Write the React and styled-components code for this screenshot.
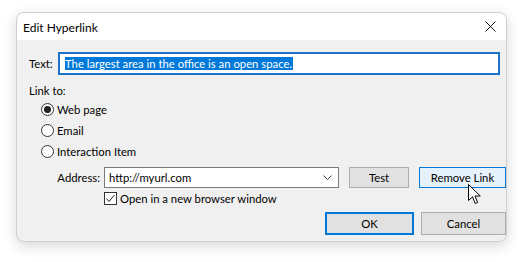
import React from "react";
import styled, { createGlobalStyle } from "styled-components";

const Global = createGlobalStyle`
  html, body {
    margin: 0;
    padding: 0;
    background: #ffffff;
  }
  body {
    font-family: Lato, "Noto Sans", sans-serif;
    font-size: 11.3px;
    line-height: 15px;
    color: #000;
  }
`;

const Page = styled.div`
  width: 531px;
  height: 262px;
  padding: 12px 24px 20px 16px;
  box-sizing: border-box;
`;

const Dialog = styled.div`
  position: relative;
  width: 491px;
  height: 230px;
  border: 1px solid #cfcfcf;
  border-radius: 8px;
  box-sizing: border-box;
  overflow: hidden;
  background: #f0f0f0;
  box-shadow: 0 4px 14px rgba(0, 0, 0, 0.16);
  display: flex;
  flex-direction: column;
`;

const TitleBar = styled.div`
  height: 27px;
  flex-shrink: 0;
  background: #fff;
  display: flex;
  align-items: center;
  justify-content: space-between;
  padding: 0 6px 0 6px;
  font-size: 12px;
`;

const Title = styled.span`
  margin-top: 1px;
`;

const CloseBtn = styled.div`
  width: 20px;
  height: 20px;
  display: flex;
  align-items: center;
  justify-content: center;
`;

const Body = styled.div`
  flex: 1;
  padding: 12px 0 0 12px;
  display: flex;
  flex-direction: column;
`;

const Row = styled.div`
  display: flex;
  align-items: center;
  height: 23px;
  padding-right: 6px;
`;

const Label = styled.span`
  width: ${(p) => p.w}px;
  flex-shrink: 0;
`;

const TextInput = styled.div`
  flex: 1;
  height: 23px;
  box-sizing: border-box;
  border: 2px solid #1a73c9;
  background: #fff;
  display: flex;
  align-items: center;
  padding-left: 5px;
`;

const Selected = styled.span`
  background: #0078d7;
  color: #fff;
  line-height: 13px;
  padding-right: 1px;
`;

const LinkTo = styled.div`
  margin-top: 8px;
  height: 15px;
`;

const RadioList = styled.div`
  display: flex;
  flex-direction: column;
  gap: 8px;
  margin-top: 5px;
  padding-left: 12px;
`;

const RadioRow = styled.div`
  display: flex;
  align-items: center;
  height: 13px;
`;

const RadioCircle = styled.span`
  width: 13px;
  height: 13px;
  box-sizing: border-box;
  border: 1px solid #333;
  border-radius: 50%;
  background: #fff;
  margin-right: 3px;
  display: flex;
  align-items: center;
  justify-content: center;
  &::after {
    content: "";
    display: ${(p) => (p.checked ? "block" : "none")};
    width: 7px;
    height: 7px;
    border-radius: 50%;
    background: #222;
  }
`;

const AddressRow = styled.div`
  display: flex;
  align-items: center;
  margin-top: 9px;
  padding-left: 28px;
`;

const AddressLabel = styled.span`
  width: 43px;
  text-align: right;
  margin-right: 4px;
`;

const Combo = styled.div`
  width: 235px;
  height: 21px;
  box-sizing: border-box;
  border: 1px solid #7a7a7a;
  background: #fff;
  display: flex;
  align-items: center;
  justify-content: space-between;
  padding: 0 6px 0 4px;
`;

const Button = styled.div`
  width: ${(p) => p.w}px;
  height: ${(p) => p.h || 21}px;
  flex-shrink: 0;
  box-sizing: border-box;
  border: ${(p) => (p.primary ? "2px solid #0078d7" : p.hover ? "1px solid #0078d7" : "1px solid #adadad")};
  background: ${(p) => (p.hover ? "#e5f1fb" : "#e1e1e1")};
  display: flex;
  align-items: center;
  justify-content: center;
  margin-left: ${(p) => p.ml || 0}px;
`;

const CheckRow = styled.div`
  display: flex;
  align-items: center;
  height: 13px;
  margin-top: 4px;
  padding-left: 75px;
`;

const CheckBox = styled.span`
  width: 13px;
  height: 13px;
  box-sizing: border-box;
  border: 1px solid #333;
  background: #fff;
  margin-right: 3px;
  display: flex;
  align-items: center;
  justify-content: center;
`;

const Footer = styled.div`
  display: flex;
  justify-content: flex-end;
  margin-top: 7px;
`;

const Cursor = styled.svg`
  position: absolute;
  left: 451px;
  top: 171px;
`;

export default function App() {
  return (
    <Page>
      <Global />
      <Dialog>
        <TitleBar>
          <Title>Edit Hyperlink</Title>
          <CloseBtn>
            <svg width="11" height="11" viewBox="0 0 11 11">
              <path d="M0.5 0.5 L10.5 10.5 M10.5 0.5 L0.5 10.5" stroke="#111" strokeWidth="1" />
            </svg>
          </CloseBtn>
        </TitleBar>
        <Body>
          <Row>
            <Label w={29}>Text:</Label>
            <TextInput>
              <Selected>The largest area in the office is an open space.</Selected>
            </TextInput>
          </Row>
          <LinkTo>Link to:</LinkTo>
          <RadioList>
            <RadioRow>
              <RadioCircle checked />
              Web page
            </RadioRow>
            <RadioRow>
              <RadioCircle />
              Email
            </RadioRow>
            <RadioRow>
              <RadioCircle />
              Interaction Item
            </RadioRow>
          </RadioList>
          <AddressRow>
            <AddressLabel>Address:</AddressLabel>
            <Combo>
              <span>http://myurl.com</span>
              <svg width="9" height="5" viewBox="0 0 9 5">
                <path d="M0.5 0.5 L4.5 4.5 L8.5 0.5" fill="none" stroke="#444" strokeWidth="1" />
              </svg>
            </Combo>
            <Button w={60} ml={10}>Test</Button>
            <Button w={87} ml={10} hover>Remove Link</Button>
          </AddressRow>
          <CheckRow>
            <CheckBox>
              <svg width="11" height="11" viewBox="0 0 11 11">
                <path d="M1.5 5.5 L4 8.5 L9.5 2" fill="none" stroke="#222" strokeWidth="1" />
              </svg>
            </CheckBox>
            Open in a new browser window
          </CheckRow>
          <Footer>
            <Button w={89} h={23} primary>OK</Button>
            <Button w={85} h={23} ml={7}>Cancel</Button>
          </Footer>
        </Body>
        <Cursor width="13" height="22" viewBox="0 0 13 22">
          <path
            d="M0.5 0.5 L0.5 16.5 L4.5 12.8 L7.2 19.5 L9.6 18.5 L7 12 L12.3 12 Z"
            fill="#fff"
            stroke="#000"
            strokeWidth="1"
            strokeLinejoin="miter"
          />
        </Cursor>
      </Dialog>
    </Page>
  );
}
